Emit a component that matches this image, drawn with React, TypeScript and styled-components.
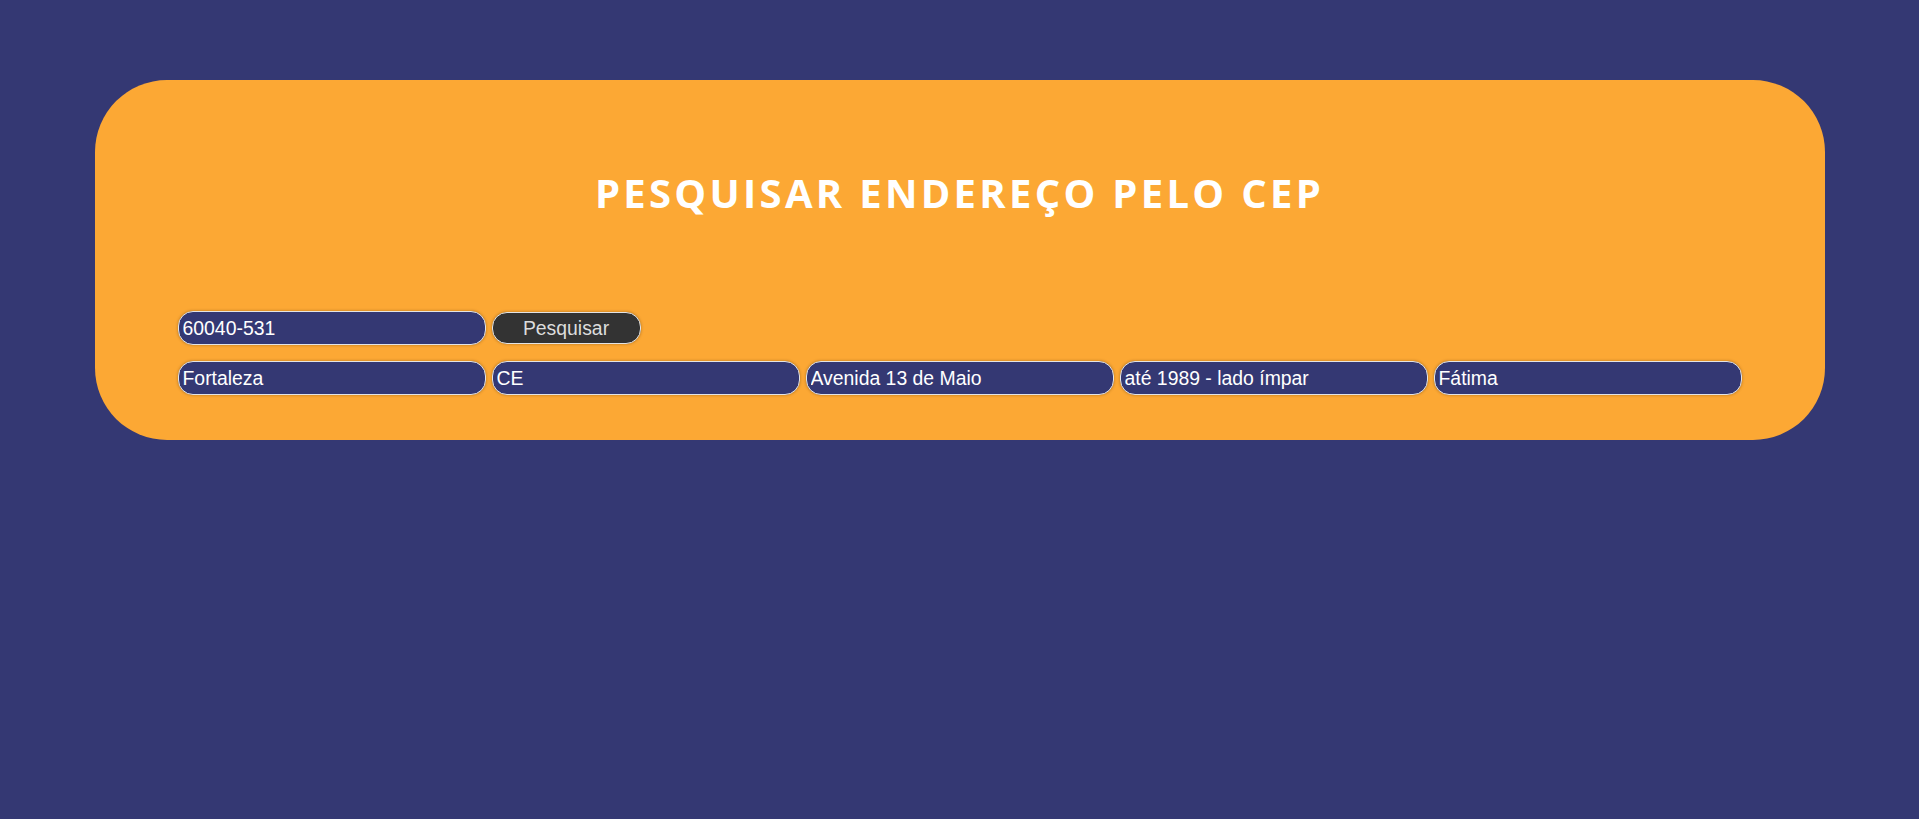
import { FC } from "react";
import styled, { createGlobalStyle } from "styled-components";

const GlobalStyle = createGlobalStyle`
  html, body {
    margin: 0;
    padding: 0;
    background-color: #343873;
    min-height: 100%;
  }
  body {
    font-family: "Liberation Sans", Arial, sans-serif;
  }
`

const Card = styled.section`
  width: 1730px;
  box-sizing: border-box;
  margin: 80px auto 0;
  padding: 85px 83px 45px;
  background-color: #fca834;
  border-radius: 72px;
`

const Title = styled.h1`
  margin: 0;
  text-align: center;
  color: #fff;
  font-family: "Open Sans", sans-serif;
  font-weight: 700;
  font-size: 40px;
  letter-spacing: 3.3px;
`

const Form = styled.form`
  margin-top: 91px;
  display: flex;
  flex-direction: column;
  gap: 16px;
`

const Row = styled.div`
  display: grid;
  grid-template-columns: repeat(5, 1fr);
  gap: 6px;
  align-items: center;
`

const Field = styled.input`
  box-sizing: border-box;
  height: 34px;
  width: 100%;
  padding: 0 4px;
  background-color: #343873;
  color: #fff;
  border: 1px solid #e4e4e4;
  border-radius: 15px;
  box-shadow: 0 0 3px rgba(90, 50, 0, 0.45);
  font-family: "Liberation Sans", Arial, sans-serif;
  font-size: 19.4px;
  outline: none;
`

const SearchButton = styled.button`
  box-sizing: border-box;
  width: 149px;
  height: 32px;
  background-color: #333;
  color: #ddd;
  border: 1px solid #e4e4e4;
  border-radius: 15px;
  box-shadow: 0 0 3px rgba(90, 50, 0, 0.45);
  font-family: "Liberation Sans", Arial, sans-serif;
  font-size: 19.4px;
  cursor: pointer;

  &:hover {
    background-color: #444;
  }
`

const endereco = ["Fortaleza", "CE", "Avenida 13 de Maio", "até 1989 - lado ímpar", "Fátima"];

const App: FC = () => {
  return (
    <>
      <GlobalStyle />
      <Card>
        <Title>PESQUISAR ENDEREÇO PELO CEP</Title>
        <Form onSubmit={(e) => e.preventDefault()}>
          <Row>
            <Field defaultValue="60040-531" />
            <SearchButton type="submit">Pesquisar</SearchButton>
          </Row>
          <Row>
            {endereco.map((valor) => (
              <Field key={valor} defaultValue={valor} readOnly />
            ))}
          </Row>
        </Form>
      </Card>
    </>
  );
};

export default App;
